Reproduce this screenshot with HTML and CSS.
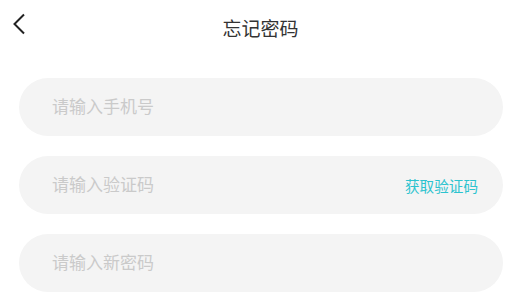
FILE: index.html
```html
<!DOCTYPE html>
<html lang="zh">
<head>
<meta charset="utf-8">
<title>忘记密码</title>
<link rel="stylesheet" href="styles.css">
</head>
<body>
<header class="topbar">
  <button class="back" aria-label="返回">
    <svg width="14" height="22" viewBox="0 0 14 22"><path d="M12 1.5 L2.5 11 L12 20.5" fill="none" stroke="#222" stroke-width="2"/></svg>
  </button>
  <h1 class="title">忘记密码</h1>
</header>
<main class="form">
  <div class="field"><input class="input" placeholder="请输入手机号"></div>
  <div class="field"><input class="input" placeholder="请输入验证码"><span class="code">获取验证码</span></div>
  <div class="field"><input class="input" type="password" placeholder="请输入新密码"></div>
</main>
</body>
</html>
```
FILE: styles.css
```css
html, body {
  margin: 0;
  padding: 0;
  background: #fff;
  font-family: "Noto Sans CJK SC", "Noto Sans", sans-serif;
}
.topbar {
  position: relative;
  height: 54px;
  display: flex;
  align-items: center;
  justify-content: center;
}
.back {
  position: absolute;
  left: 12px;
  top: 13px;
  border: 0;
  background: none;
  padding: 0;
  width: 14px;
  height: 22px;
}
.back svg { display: block; }
.title {
  margin: 0;
  font-size: 19px;
  font-weight: 400;
  color: #333;
  line-height: 1;
}
.form {
  padding: 24px 18px 0 19px;
  display: flex;
  flex-direction: column;
  gap: 20px;
}
.field {
  height: 58px;
  border-radius: 29px;
  background: #f4f4f4;
  display: flex;
  align-items: center;
  padding: 0 25px 0 33px;
}
.input {
  flex: 1;
  min-width: 0;
  border: 0;
  outline: none;
  background: transparent;
  font-family: inherit;
  font-size: 17px;
  color: #333;
  padding: 0 0 3px 0;
}
.input::placeholder { color: #cacaca; }
.code {
  font-size: 14.6px;
  color: #2cc3cf;
}
```
